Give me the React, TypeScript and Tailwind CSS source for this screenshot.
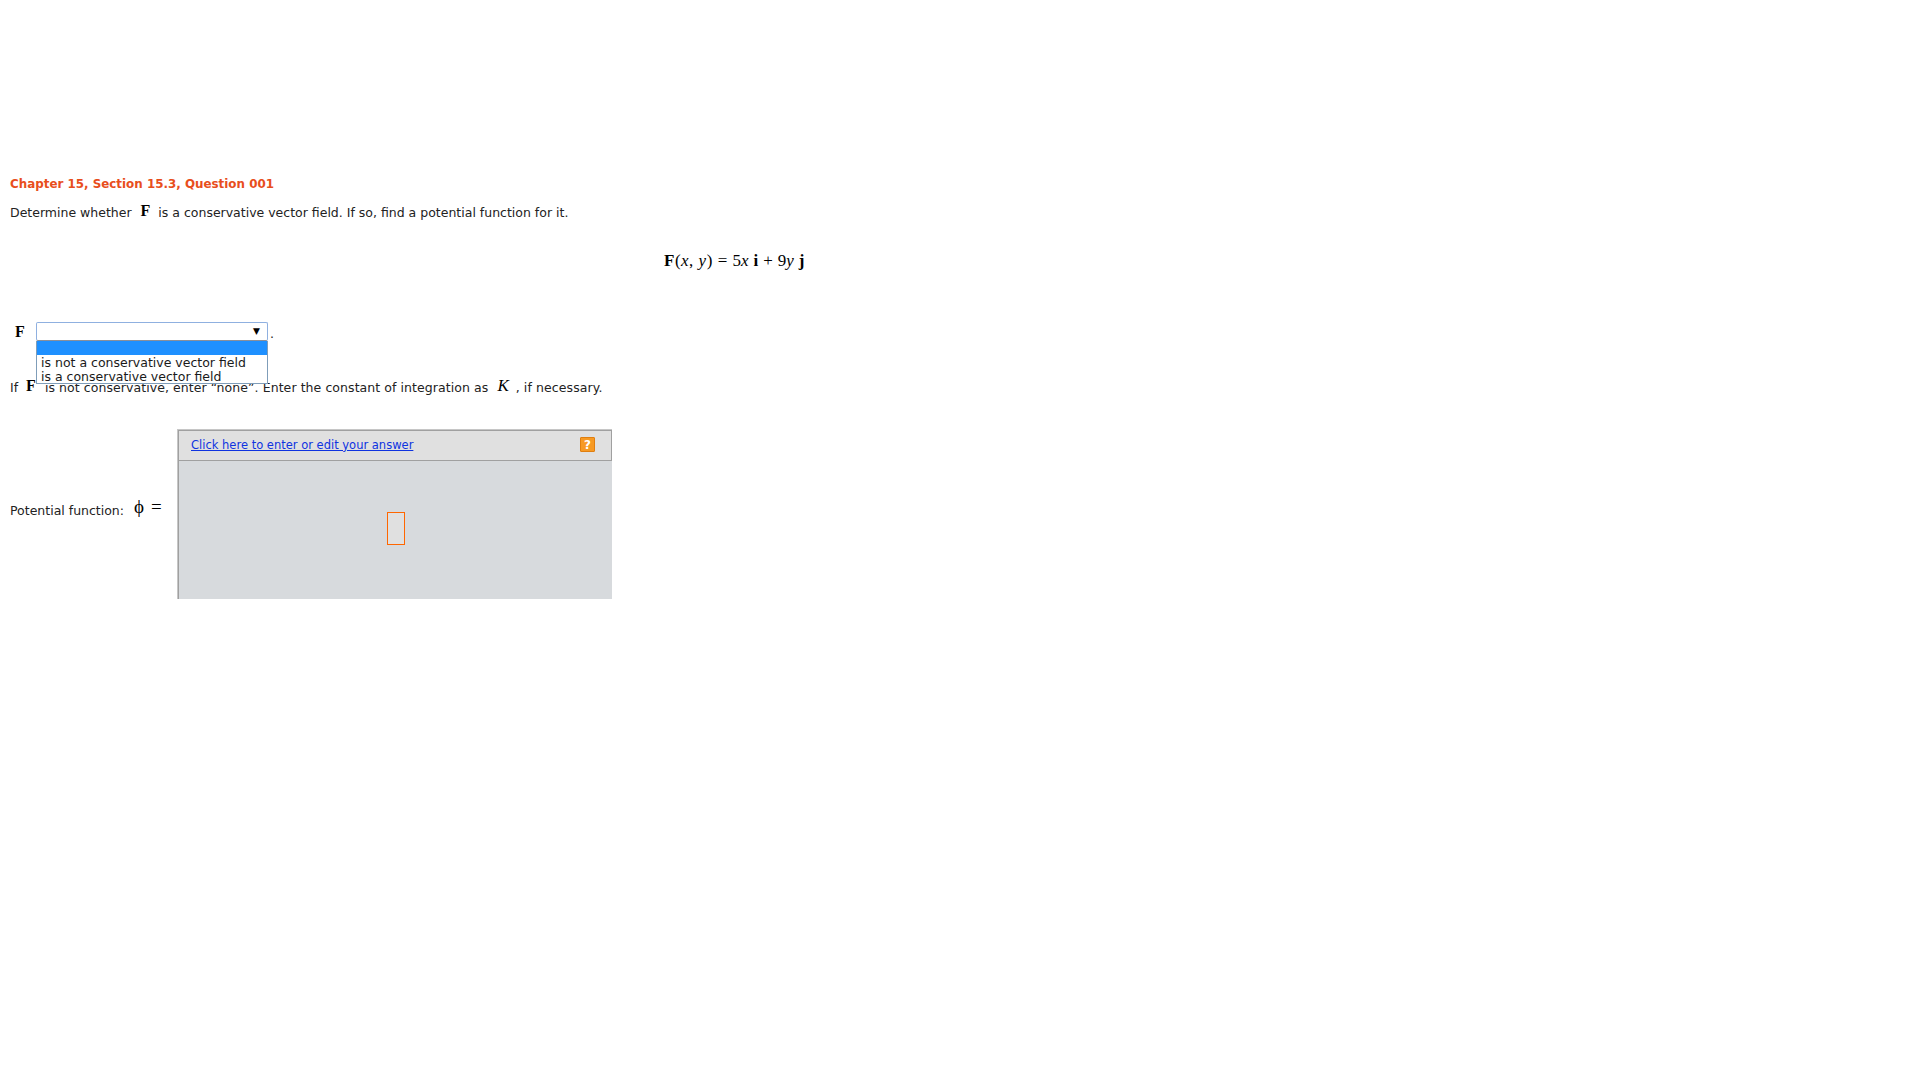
import React from 'react';

const sans = { fontFamily: '"DejaVu Sans", Verdana, sans-serif' };

function MathF({ className = '' }: { className?: string }) {
  return <b className={`font-['Liberation_Serif',serif] text-[16px] font-bold text-black ${className}`}>F</b>;
}

function Dropdown() {
  return (
    <div className="relative h-[19px] w-[232px]">
      <div className="flex h-[19px] items-center justify-end rounded-[2px] border border-[#8fb0e0] border-b-[#8a8f99] bg-white pr-[7px]">
        <span className="text-[9px] leading-none text-black">▼</span>
      </div>
      <div className="absolute left-0 top-[19px] z-10 h-[43px] w-[232px] border border-t-0 border-[#7f9db9] bg-white text-[12.5px] leading-[14px] text-[#1a1a1a]">
        <div className="h-[14px] bg-[#1e90ff]" />
        <div className="pl-[4px] pt-[1px]">is not a conservative vector field</div>
        <div className="pl-[4px]">is a conservative vector field</div>
      </div>
    </div>
  );
}

export default function App() {
  return (
    <div className="min-h-screen bg-white pl-[10px] pt-[176px] text-[12.5px] leading-[16px] text-[#222]" style={sans}>
      <h1 className="text-[11.9px] font-bold leading-[16px] text-[#e84e1c]">Chapter 15, Section 15.3, Question 001</h1>

      <p className="mt-[9px] flex h-[24px] items-center">
        <span>Determine whether</span>
        <MathF className="ml-[9px] mr-[8px] -mt-[5px]" />
        <span>is a conservative vector field. If so, find a potential function for it.</span>
      </p>

      <div className="mt-[24px] flex h-[24px] items-center gap-[5px] pl-[654px] font-['Liberation_Serif',serif] text-[17px] text-black whitespace-pre">
        <span className="tracking-[0.5px]"><b>F</b>(<i>x</i>, <i>y</i>)</span>
        <span>=</span>
        <span>5<i>x</i></span>
        <b>i</b>
        <span>+</span>
        <span>9<i>y</i></span>
        <b>j</b>
      </div>

      <div className="mt-[47px] flex items-center pl-[5px]">
        <MathF className="w-[21px] mt-[1px]" />
        <Dropdown />
        <span className="mt-[6px] ml-[2px]">.</span>
      </div>

      <p className="mt-[34px] flex h-[24px] items-center">
        <span>If</span>
        <MathF className="ml-[8px] mr-[9px] -mt-[5px]" />
        <span className="tracking-[0.07px]">is not conservative, enter “none”. Enter the constant of integration as</span>
        <i className="ml-[9px] mr-[7px] -mt-[5px] font-['Liberation_Serif',serif] text-[17px] text-black">K</i>
        <span className="tracking-[0.1px]">, if necessary.</span>
      </p>

      <div className="mt-[29px] flex">
        <div className="flex w-[167px] items-center pb-[7px]">
          <span>Potential function:</span>
          <span className="ml-[10px] -mt-[8px] flex gap-[7px] font-['Liberation_Serif',serif] text-[19px] text-black">
            <span>ϕ</span>
            <span>=</span>
          </span>
        </div>
        <div className="h-[170px] w-[435px] border-l border-t border-[#c6c6c6]">
          <div className="h-[169px] border-l border-t border-[#a0a0a0] bg-[#d7dadd]">
            <div className="flex h-[30px] items-center justify-between border-b border-r border-[#a0a0a0] bg-[#e0e0e0] pb-[2px] pl-[12px] pr-[16px]">
              <a href="#" className="text-[11.5px] text-[#0f33e0] underline">Click here to enter or edit your answer</a>
              <span className="flex h-[15px] w-[15px] items-center justify-center rounded-[1px] border border-[#e07f10] bg-[#f79a24] text-[12px] font-bold leading-none text-white">?</span>
            </div>
            <div className="flex h-[135px] items-center justify-center">
              <div className="h-[33px] w-[18px] border border-[#ff6600] bg-[#e0e0e0]" />
            </div>
          </div>
        </div>
      </div>
    </div>
  );
}
